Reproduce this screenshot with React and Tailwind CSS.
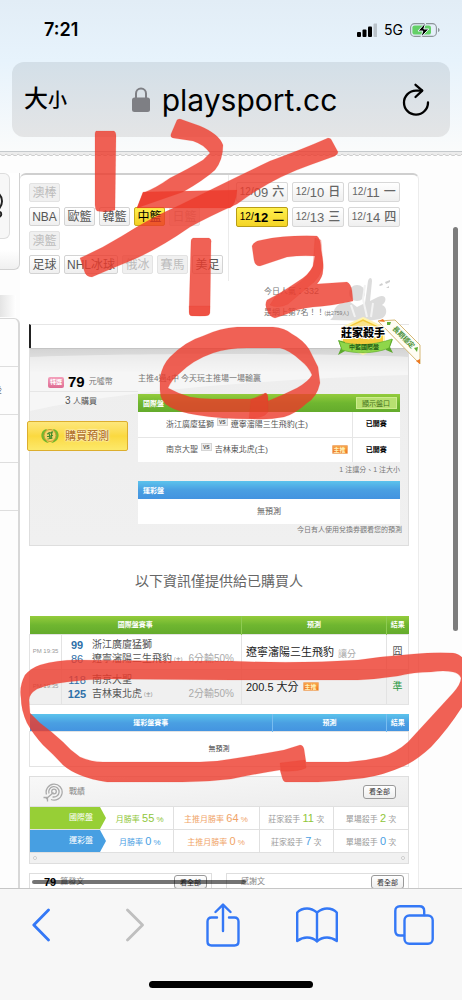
import React from 'react';

const tagRows = [
  [{ label: '澳棒', off: true }],
  [{ label: 'NBA' }, { label: '歐籃' }, { label: '韓籃' }, { label: '中籃', active: true }, { label: '日籃', off: true }],
  [{ label: '澳籃', off: true }],
  [{ label: '足球' }, { label: 'NHL冰球' }, { label: '俄冰', off: true }, { label: '賽馬', off: true }, { label: '美足' }],
];

const dateRows = [
  [{ day: '09', week: '六' }, { day: '10', week: '日' }, { day: '11', week: '一' }],
  [{ day: '12', week: '二', active: true }, { day: '13', week: '三' }, { day: '14', week: '四' }],
];

const games = [
  {
    time: 'PM 19:35',
    away: { score: 99, name: '浙江廣廈猛獅', bold: true },
    home: { score: 86, name: '遼寧瀋陽三生飛豹' },
    odds: '6分輸50%',
    pick: '遼寧瀋陽三生飛豹',
    kind: '讓分',
    result: '囧',
  },
  {
    time: 'PM 19:35',
    away: { score: 118, name: '南京大聖' },
    home: { score: 125, name: '吉林東北虎', bold: true },
    odds: '2分輸50%',
    pick: '200.5 大分',
    main: true,
    result: '準',
  },
];

const records = [
  { name: '國際盤', blue: false, rate: 55, mainRate: 64, banker: 11, single: 2 },
  { name: '運彩盤', blue: true, rate: 0, mainRate: 0, banker: 7, single: 0 },
];

const green = 'bg-linear-to-b from-[#94cc3c] via-[#6fb630] to-[#64ab2c]';
const blue = 'bg-linear-to-b from-[#5cc3ec] via-[#4a9fe2] to-[#4393e0]';

const StatusBar = () => (
  <div className="flex items-center justify-between pt-[18px] pl-11 pr-[22px] h-[42px]">
    <span className="text-[18px] leading-6 font-semibold">7:21</span>
    <div className="flex items-center gap-[7px]">
      <svg width="20" height="14" viewBox="0 0 20 14" aria-hidden="true">
        <rect x="0" y="9" width="4" height="5" rx="1" />
        <rect x="5.5" y="6.5" width="4" height="7.5" rx="1" />
        <rect x="11" y="3.5" width="4" height="10.5" rx="1" />
        <rect x="16.5" y="0.5" width="4" height="13.5" rx="1" fill="#b9c2c9" />
      </svg>
      <span className="text-[14px] leading-6">5G</span>
      <svg width="30" height="16" viewBox="0 0 30 16" aria-hidden="true">
        <rect x="0.6" y="1.6" width="25.8" height="12.8" rx="4" fill="none" stroke="#8d9499" strokeWidth="1.1" />
        <rect x="2.4" y="3.4" width="18.6" height="9.2" rx="2.2" fill="#63d067" />
        <path d="M28 6v4c1-.4 1.6-1.1 1.6-2s-.6-1.6-1.6-2z" fill="#8d9499" />
        <path d="M15.8 0.5L8 9h4.8l-2 6.5L18.8 7h-5z" stroke="#e8f3fb" strokeWidth="1" />
      </svg>
    </div>
  </div>
);

const AddressBar = () => (
  <div className="mx-3 mt-5 h-[75px] rounded-xl bg-linear-to-b from-[#d3dfe8] to-[#e4e5e6] flex items-center justify-between pl-3 pr-5">
    <button type="button" className="font-medium leading-8 text-[24px]" aria-label="大小">
      大<span className="text-[19px]">小</span>
    </button>
    <div className="flex items-center gap-3">
      <svg width="18" height="25" viewBox="0 0 18 25" fill="#7e7f84" aria-hidden="true">
        <path d="M4 11V6.5a5 5 0 0 1 10 0V11" fill="none" stroke="#7e7f84" strokeWidth="2" />
        <rect x="0" y="10.5" width="18" height="14.5" rx="2.5" />
      </svg>
      <span className="text-[30px] leading-9">playsport.cc</span>
    </div>
    <button type="button" aria-label="重新載入">
      <svg width="28" height="33" viewBox="0 0 28 33" fill="none" stroke="#000" strokeWidth="2.3" strokeLinecap="round" strokeLinejoin="round">
        <path d="M20 7.6H14A12 12 0 1 0 26 19.5" />
        <path d="M13.5 1.8L20.3 7.6L13.5 14" />
      </svg>
    </button>
  </div>
);

const LeftRail = () => (
  <div className="w-5 shrink-0 flex flex-col overflow-hidden">
    <div className="h-[97px] pr-[9px] rounded-br-md border-r border-b border-[#d2d2d2] bg-linear-to-b from-white from-80% to-[#f0f0f0]">
      <div className="h-[66px] rounded-r-md border border-l-0 border-[#dddddd] bg-[#f7f7f7] flex items-center">
        <svg width="4" height="26" viewBox="0 0 4 26" aria-hidden="true">
          <path d="M-1 1C3 5 3 11 -1 16M-1 19c3 0 3 4 0 5" fill="none" stroke="#222" strokeWidth="2" />
        </svg>
      </div>
    </div>
    <div className="h-12 pt-[25px] pr-1">
      <div className="h-[22px] bg-linear-to-r from-[#e4e4e4] to-white" />
    </div>
    <div className="flex-1 rounded-tr-md border-r-2 border-t border-[#d8d8d8] text-[9px] text-[#777]">
      <div className="h-12 border-b border-[#dedede]" />
      <div className="h-12 border-b border-[#dedede] flex items-center">
        <span className="-ml-[7px]">後</span>
      </div>
      <div className="h-12 border-b border-[#dedede]" />
      <div className="h-12 border-b border-[#dedede]" />
    </div>
  </div>
);

const Tag = ({ label, off, active }) => {
  let look = 'border-[#d3d3d3] bg-linear-to-b from-white to-[#efefef] text-[#555]';
  if (off) look = 'border-[#e3e3e3] bg-[#f0f0f0] text-[#bcbcbc]';
  if (active) look = 'border-[#c5a91c] bg-linear-to-b from-[#fff04c] to-[#f4cf21] text-black';
  return (
    <button type="button" className={`shrink-0 h-[19px] min-w-[31px] px-[2px] rounded-xs border text-[12px] leading-none whitespace-nowrap ${look}`}>
      {label}
    </button>
  );
};

const DateButton = ({ day, week, active }) => (
  <button
    type="button"
    className={`h-5 w-[52px] rounded-xs border flex items-center justify-center leading-none ${
      active
        ? 'border-[#b89d16] bg-linear-to-b from-[#fff04c] to-[#f4d424] text-black'
        : 'border-[#d8d8d8] bg-linear-to-b from-white to-[#efefef] text-[#666]'
    }`}
  >
    <span className="text-[10px]">12/</span>
    <span className={`text-[13px] ${active ? 'font-bold' : ''}`}>{day}</span>
    <span className="ml-1 text-[12px] font-medium">{week}</span>
  </button>
);

const Filters = () => (
  <div className="flex">
    <div className="flex-1 min-w-0 pt-2 h-[106px] flex flex-col gap-[5px] border-r border-[#ebebeb]">
      {tagRows.map((row, i) => (
        <div key={i} className="flex gap-1">
          {row.map((t) => <Tag key={t.label} {...t} />)}
        </div>
      ))}
    </div>
    <div className="w-[180px] pt-[7px] pl-[7px] pr-[9px] flex flex-col gap-[5px]">
      {dateRows.map((row, i) => (
        <div key={i} className="flex justify-between">
          {row.map((d) => <DateButton key={d.day} {...d} />)}
        </div>
      ))}
    </div>
  </div>
);

const Medal = () => (
  <svg className="absolute -right-[13px] -top-[74px]" width="96" height="90" viewBox="0 0 96 90" aria-hidden="true">
    {/* faded statue */}
    <g fill="#dcdcdc">
      <circle cx="32" cy="18" r="8" />
      <path d="M8 42c0-8 4-14 12-14l4-2 8 6 8-4 3-22c1-4 4-4 4 0l-2 20 8-4c8-4 10 4 4 8 6 2 6 12-2 14l-12 2-38-1z" />
      <path d="M54 10l3-2 1 2-3 1zM60 7l5-2 0 2-4 2zM61 13l3-2 0 2z" fill="#cfcfcf" />
    </g>
    <path d="M40 10l-2 14 4 18M26 30l4 12M48 28l-2 14" fill="none" stroke="#f3f3f3" strokeWidth="2" />
    {/* corner ribbon */}
    <path d="M53 46L70 45L95 70V89z" fill="#fffdf4" stroke="#d5b876" strokeWidth="1" />
    <path d="M53 46l5-2 2 3zM95 84v5l-4-3z" fill="#ee7a23" />
    <path d="M62 47l4 0-1 3-3 0zM89 73l4-1-1 5z" fill="#5eae36" />
    <text x="0" y="0" transform="translate(67 54) rotate(45)" fontSize="7" fontWeight="700" fill="#4d9139">長期穩定</text>
    {/* hexagon */}
    <path d="M38 43L59 53V70L38 79L17 70V53z" fill="#f4cb3d" stroke="#fff3b0" strokeWidth="2" />
    <path d="M38 46L56 54V60H20V54z" fill="#fbe38a" />
    <path d="M13 65l7 2v9l-7 4 3-7zM68 64l-7 3v8l7 3-3-6z" fill="#5ba92c" />
    <path d="M14 66C30 72 50 70 67 64L64 73C50 79 30 79 17 75z" fill="#8fd64a" stroke="#5ba92c" strokeWidth="0.6" />
    <text x="38" y="62" textAnchor="middle" fontSize="11" fontWeight="900" stroke="#fff" strokeWidth="2" paintOrder="stroke">莊家殺手</text>
    <text x="39" y="74" textAnchor="middle" fontSize="6" fontWeight="700" fill="#245c14">中籃國際盤</text>
  </svg>
);

const MainPick = () => (
  <span className="inline-flex items-center justify-center w-4 h-[9px] rounded-[1px] border border-[#f0b27a] bg-linear-to-b from-[#f8a54a] to-[#ee7420] text-[6px] leading-none font-bold text-[#fff2b8]">
    主推
  </span>
);

const Versus = () => (
  <span className="inline-block mx-[3px] px-px border border-[#d5d5d5] bg-[#eee] text-[5px] leading-[6px] align-[3px] font-bold">VS</span>
);

const BuyPanel = () => (
  <section className="relative border border-[#dedede] border-t-[#c4c4c4] bg-linear-to-b from-[#d4d4d4] via-[#eeeeee] via-12% to-[#f0f0f0] flex h-[198px]">
    <svg className="absolute inset-x-0 top-0 w-full h-[70px]" viewBox="0 0 380 70" preserveAspectRatio="none" aria-hidden="true">
      <path d="M0 8C90 4 290 4 380 8V26C240 30 90 42 0 62z" fill="#fff" fillOpacity="0.45" />
    </svg>
    <div className="relative w-[108px] pt-6">
      <p className="flex items-center pl-[18px] gap-1 text-[8px] leading-[18px] text-[#777]">
        <span className="w-4 h-[11px] flex items-center justify-center rounded-xs bg-linear-to-b from-[#f3a0bb] to-[#de6b92] text-[6px] text-white font-bold">特選</span>
        <span className="text-[15px] font-bold text-black">79</span>
        元噓幣
      </p>
      <p className="border-t border-[#e6e6e6] pr-1.5 text-center text-[8px] leading-[18px] text-[#555]">
        <span className="text-[10px]">3</span> 人購買
      </p>
      <button
        type="button"
        className="-ml-[3px] mt-2.5 w-[101px] h-[30px] pl-3 flex items-center gap-[5px] rounded-xs border border-[#dcae2e] bg-linear-to-b from-[#fde77a] via-[#fbd93f] to-[#fce96a] text-[11px] leading-none font-medium text-[#b5762a]"
      >
        <svg width="20" height="18" viewBox="0 0 20 18" aria-hidden="true">
          <path d="M7 2C1 3 0 9 3 13c2 2 4 3 6 3-4-2-6-8-2-14zM13 2c6 1 7 7 4 11-2 2-4 3-6 3 4-2 6-8 2-14z" fill="#72b62e" />
          <circle cx="10" cy="8.5" r="6" fill="#f6d36a" stroke="#c49b31" strokeWidth="1" />
          <path d="M7 7l6-2M7 9.5l6-1M9 5l1 7M12 4.5l-1 7.5M7.5 12l5-1" stroke="#3f8a2b" strokeWidth="1.2" />
        </svg>
        <span className="[text-shadow:0_0_2px_#fff,0_0_2px_#fff]">購買預測</span>
      </button>
    </div>
    <div className="relative flex-1 pr-2 pt-6 text-[8px] text-[#555]">
      <p className="leading-3 text-[#777]">主推4過4中 今天玩主推場一場輸贏</p>
      <table className="mt-[9px] w-full border-collapse bg-white">
        <thead>
          <tr className={`h-[18px] ${green}`}>
            <th className="pl-[5px] text-left text-[7px] leading-none text-white">國際盤</th>
            <th className="w-12">
              <button type="button" className="block mx-auto w-[41px] h-3 border border-[#cdec8e] bg-[#b7e070] text-[7px] leading-none font-normal text-[#447019]">顯示盤口</button>
            </th>
          </tr>
        </thead>
        <tbody>
          <tr className="h-[25px] border-b border-[#e6e6e6]">
            <td className="pl-7 leading-3">浙江廣廈猛獅<Versus />遼寧瀋陽三生飛豹(主)</td>
            <td className="border-l border-[#e6e6e6] text-center text-[7px] font-bold text-black">已開賽</td>
          </tr>
          <tr className="h-[25px]">
            <td className="pl-7 pr-1 leading-3">
              <div className="flex items-center justify-between">
                <span>南京大聖<Versus />吉林東北虎(主)</span>
                <MainPick />
              </div>
            </td>
            <td className="border-l border-[#e6e6e6] text-center text-[7px] font-bold text-black">已開賽</td>
          </tr>
        </tbody>
      </table>
      <p className="mt-0.5 text-right text-[7px] leading-3 text-[#777]">1 注讓分、1 注大小</p>
      <table className="mt-[5px] w-full border-collapse bg-white">
        <thead>
          <tr className={`h-[18px] ${blue}`}>
            <th className="pl-[5px] text-left text-[7px] leading-none text-white">運彩盤</th>
          </tr>
        </thead>
        <tbody>
          <tr className="h-[25px]"><td className="text-center leading-3">無預測</td></tr>
        </tbody>
      </table>
      <p className="-mr-0.5 text-right text-[7px] leading-3 text-[#777]">今日有人使用兌換券觀看您的預測</p>
    </div>
    <Medal />
  </section>
);

const Team = ({ score, name, bold, home }) => (
  <div className="flex items-center leading-[14px] whitespace-nowrap">
    <span className={`w-5 shrink-0 text-center text-[11px] text-[#2f70a8] ${bold ? 'font-bold' : ''}`}>{score}</span>
    <span className="ml-[5px] text-[10px] text-[#555]">{name}</span>
    {home && <span className="ml-[2px] text-[5px] text-[#888]">(主)</span>}
  </div>
);

const GameTable = () => (
  <table className="w-full table-fixed border-collapse">
    <colgroup>
      <col className="w-8" />
      <col />
      <col className="w-[145px]" />
      <col className="w-[22px]" />
    </colgroup>
    <thead>
      <tr className={`h-[18px] text-[7px] leading-none text-white ${green}`}>
        <th colSpan={2}>國際盤賽事</th>
        <th className="border-l border-[#8ecb52]">預測</th>
        <th className="border-l border-[#8ecb52]">結果</th>
      </tr>
    </thead>
    <tbody>
      {games.map((g) => (
        <tr key={g.home.name} className="h-[35px] border border-[#e3e3e3] odd:bg-white even:bg-[#f0f0f0]">
          <td className="text-center text-[6px] text-[#999] whitespace-nowrap">{g.time}</td>
          <td className="border-l border-[#e3e3e3] pl-[5px]">
            <div className="flex items-end justify-between">
              <div>
                <Team {...g.away} />
                <Team {...g.home} home />
              </div>
              <span className="pr-[7px] text-[10px] leading-[14px] text-[#aaa] whitespace-nowrap">{g.odds}</span>
            </div>
          </td>
          <td className="border-l border-[#e3e3e3] pl-1">
            <div className="flex items-center gap-1 text-[11px] leading-[14px] text-[#222]">
              {g.pick}
              {g.kind && <span className="pt-1 text-[9px] text-[#aaa]">{g.kind}</span>}
              {g.main && <MainPick />}
            </div>
          </td>
          <td className={`border-l border-[#e3e3e3] text-center text-[10px] leading-3 ${g.main ? 'text-[#2f9a45]' : 'text-[#555]'}`}>{g.result}</td>
        </tr>
      ))}
    </tbody>
  </table>
);

const LotteryTable = () => (
  <table className="mt-[9px] w-full table-fixed border-collapse">
    <thead>
      <tr className={`h-[18px] text-[7px] leading-none text-white ${blue}`}>
        <th>運彩盤賽事</th>
        <th className="w-[114px] border-l border-[#79bdf0]">預測</th>
        <th className="w-[22px] border-l border-[#79bdf0]">結果</th>
      </tr>
    </thead>
    <tbody>
      <tr className="h-[35px] border border-[#e3e3e3]">
        <td colSpan={3} className="text-center text-[7px] leading-3 text-[#444]">無預測</td>
      </tr>
    </tbody>
  </table>
);

const MoreButton = () => (
  <button type="button" className="shrink-0 h-[14px] px-[5px] rounded-[3px] border border-[#999] bg-linear-to-b from-white to-[#eee] text-[7px] leading-none text-[#333]">
    看全部
  </button>
);

const Stat = ({ label, value, unit, color, text = 'text-[#999]' }) => (
  <td className={`border-l border-[#e0e0e0] text-center text-[8px] leading-none whitespace-nowrap ${text}`}>
    {label} <span className={`text-[11px] ${color}`}>{value}</span> {unit}
  </td>
);

const Records = () => (
  <section className="mt-[9px] border border-[#dedede] bg-[#f1f1f1]">
    <div className="h-[29px] pl-[13px] pr-3 flex items-center gap-[6px] bg-linear-to-br from-[#f8f8f8] to-[#ececec]">
      <svg width="20" height="20" viewBox="0 0 20 20" fill="none" stroke="#aaa" strokeWidth="1.3" aria-hidden="true">
        <path d="M3.5 12.5A8 8 0 1 1 8 17.5" />
        <path d="M6 11.5A5.2 5.2 0 1 1 9.5 14.8" />
        <circle cx="11" cy="9.5" r="2.3" />
        <path d="M10.5 10.5L3 17M0.5 15.5h4v4" />
      </svg>
      <h3 className="flex-1 text-[8px] leading-3 text-[#888]">戰績</h3>
      <MoreButton />
    </div>
    <table className="w-full table-fixed border-collapse bg-white">
      <tbody>
        {records.map((r) => {
          const tone = r.blue ? 'text-[#4aa0e3]' : 'text-[#8fc63a]';
          return (
            <tr key={r.name} className="h-[23px] border-y border-[#e0e0e0]">
              <th scope="row" className="relative w-[77px] p-0 text-right text-[8px] leading-none font-normal text-white">
                <svg className="absolute inset-0 w-full h-full" viewBox="0 0 77 24" preserveAspectRatio="none" aria-hidden="true">
                  <path d="M0 0H70L76 12L70 24H0z" fill={r.blue ? '#479fe2' : '#97cf36'} />
                </svg>
                <span className="relative pr-[14px]">{r.name}</span>
              </th>
              <td className={`w-[66px] text-center text-[8px] leading-none whitespace-nowrap ${tone}`}>
                月勝率 <span className="text-[11px]">{r.rate}</span> %
              </td>
              <Stat label="主推月勝率" value={r.mainRate} unit="%" color="" text="w-[86px] text-[#f0a468]" />
              <Stat label="莊家殺手" value={r.banker} unit="次" color={tone} />
              <Stat label="單場殺手" value={r.single} unit="次" color={tone} />
            </tr>
          );
        })}
      </tbody>
    </table>
    <div className="h-2.5 px-[3px] flex items-center justify-between">
      <span className="size-1 rounded-full border border-[#ccc] bg-white" />
      <span className="size-1 rounded-full border border-[#ccc] bg-white" />
    </div>
  </section>
);

const Posts = () => (
  <div className="mt-[9px] grid grid-cols-2 gap-[14px]">
    <section className="h-10 pt-px pr-1 pl-[14px] flex items-start gap-1 border border-[#dedede]">
      <b className="text-[11px] leading-[14px] text-black">79</b>
      <span className="flex-1 text-[8px] leading-[14px] text-[#888]">篇發文</span>
      <MoreButton />
    </section>
    <section className="h-10 pt-px pr-1 pl-[14px] flex items-start border border-[#dedede]">
      <span className="flex-1 text-[8px] leading-[14px] text-[#888]">感謝文</span>
      <MoreButton />
    </section>
  </div>
);

// finger-drawn marks over the page
const Ink = () => (
  <svg className="absolute left-0 top-0 pointer-events-none" width="462" height="1000" viewBox="0 0 462 1000" aria-hidden="true">
    <g fill="#ec3a2b" fillOpacity="0.8" stroke="#ec3a2b" strokeOpacity="0.15" strokeWidth="1" strokeLinejoin="round">
      <path d="M96 131H114Q116 132 116 136L115 210Q106 213 97 211Q95 209 95 205V134Q95 132 96 131z" />
      <path d="M177 120Q179 118 183 120L200 126Q219 134 223 145Q223 160 215 170Q204 180 183 192L137 208L143 193Q156 188 170 178Q190 168 203 160L210 153Q203 144 193 141L173 138Q170 137 171 134z" />
      <path d="M143 192L237 190Q236 205 230 208L137 208z" />
      <path d="M80 258Q101 249 122 236Q150 218 180 205Q230 180 270 161Q303 149 328 138Q331 138 332 141L338 152Q338 154 335 156L310 165Q272 178 237 204Q208 217 190 227Q157 250 130 261Q108 270 92 277Q87 277 85 273z" />
      <path d="M193 238H209Q212 239 211 243L210 313Q209 316 205 316H192Q189 316 189 312L191 241Q191 239 193 238z" />
      <path d="M189 306L210 306L209 315Q200 317 190 315z" fillOpacity="0.4" />
      <path d="M252 246Q254 241 262 240Q285 235 317 236Q321 239 321 250Q324 265 323 270Q323 277 317 284L347 282Q351 284 352 291L353 301Q331 306 313 307Q295 309 287 314L275 318Q270 317 268 312Q264 305 267 300Q281 293 297 282Q309 275 313 266L315 256Q301 255 287 257L260 266Q255 266 254 260z" />
      <path d="M315 238L321 240L323 265Q321 278 308 287L288 304Q278 309 270 305L275 297Q304 284 313 267z" fillOpacity="0.35" />
      <path fillRule="evenodd" d="M160 377Q163 364 170 357Q186 341 203 336Q220 328 237 327L273 327Q285 328 292 334Q303 340 309 349L318 367L320 383Q317 397 307 403Q295 414 284 417Q268 420 253 419Q220 419 197 415Q179 412 170 407Q160 402 160 390zM168 388Q179 394 190 397Q201 399 213 399L250 399Q262 397 265 393Q268 392 268 401Q283 395 297 388Q309 381 312 375Q309 367 300 360Q289 350 280 348H247Q228 348 213 353Q193 360 180 373Q172 379 168 388z" />
      <path d="M251 400L262 394Q268 392 268 398V412Q263 419 249 418z" fillOpacity="0.45" />
      <path d="M453 653Q467 655 467 674Q467 700 462 707Q448 729 431 747Q417 760 404 766Q384 775 364 778Q340 781 318 782H286Q283 782 282 777L280 770Q255 774 231 779Q207 782 183 782H107Q92 780 80 775Q70 771 63 765Q54 755 43 745Q33 734 27 723Q21 710 21 698Q19 686 25 675Q31 668 40 665Q57 660 77 660L167 661H230Q295 664 358 660Q386 656 414 654Q434 652 453 653zM453 672Q444 670 431 672Q414 672 398 676Q378 679 358 680H231L110 679Q88 679 67 682Q49 684 37 689Q29 694 29 700L30 713L40 723Q51 731 63 742Q70 750 80 757Q91 762 103 762H200Q216 762 231 759Q257 755 284 750L300 745Q303 745 304 749L306 762H348Q365 761 381 757Q396 753 408 742L431 717L453 693Q461 684 461 678Q459 673 453 672z" fillRule="evenodd" />
      <path d="M280 763L305 760L306 768Q297 772 281 771z" fillOpacity="0.45" />
    </g>
  </svg>
);

const Toolbar = () => (
  <nav className="shrink-0 h-28 border-t border-[#c6c6c6] bg-[#f7f7f7] flex flex-col justify-between items-center pt-[14px] pb-3">
    <div className="w-full pl-8 pr-7 flex items-center justify-between text-[#3478f6] [&_svg]:fill-none [&_svg]:stroke-current [&_svg]:[stroke-linecap:round] [&_svg]:[stroke-linejoin:round]">
      <button type="button" aria-label="上一頁" className="w-[38px]">
        <svg width="18" height="34" viewBox="0 0 18 34" strokeWidth="2.8"><path d="M16.5 2L1.8 17L16.5 32" /></svg>
      </button>
      <button type="button" aria-label="下一頁" className="w-6 text-[#bfbfbf]">
        <svg width="18" height="34" viewBox="0 0 18 34" strokeWidth="2.8"><path d="M1.5 2L16.5 17L1.5 32" /></svg>
      </button>
      <button type="button" aria-label="分享">
        <svg width="34" height="44" viewBox="0 0 34 44" strokeWidth="2.4">
          <path d="M11 14.5H5.5Q1.5 14.5 1.5 18.5V38.5Q1.5 42.5 5.5 42.5H28.5Q32.5 42.5 32.5 38.5V18.5Q32.5 14.5 28.5 14.5H23" />
          <path d="M17 28V2M9.5 9L17 1.6L24.5 9" />
        </svg>
      </button>
      <button type="button" aria-label="書籤">
        <svg width="42" height="36" viewBox="0 0 42 36" strokeWidth="2.4">
          <path d="M21 34.5V5.5Q16 1.5 11 1.5Q5 1.5 1.2 5.5V34Q6 30.5 11 30.5Q17 30.5 21 34.5Q25 30.5 31 30.5Q36 30.5 40.8 34V5.5Q37 1.5 31 1.5Q26 1.5 21 5.5" />
        </svg>
      </button>
      <button type="button" aria-label="分頁">
        <svg width="40" height="40" viewBox="0 0 40 40" strokeWidth="2.4">
          <path d="M10 30.5H6Q1.3 30.5 1.3 25.8V6Q1.3 1.3 6 1.3H25.5Q30.2 1.3 30.2 6V10" />
          <rect x="10.5" y="10.5" width="28.2" height="28.2" rx="4.7" />
        </svg>
      </button>
    </div>
    <span className="w-[164px] h-[7px] rounded-full bg-black" />
  </nav>
);

export default function App() {
  return (
    <div className="relative h-screen flex flex-col overflow-hidden bg-[#fdfdfd] font-['Liberation_Sans','Noto_Sans_CJK_TC',sans-serif]">
      <header className="shrink-0 h-[152px] border-b border-[#c5c9cc] bg-linear-to-b from-[#e2edf6] via-[#e7f3fc] via-40% to-[#fafbfb] font-['Inter','Noto_Sans_CJK_TC',sans-serif]">
        <StatusBar />
        <AddressBar />
      </header>

      <main className="relative flex-1 min-h-0 overflow-hidden flex flex-col">
        <svg className="w-full h-1 shrink-0" aria-hidden="true">
          <defs>
            <pattern id="teeth" width="6" height="4" patternUnits="userSpaceOnUse">
              <path d="M0 0H6V2L4.5 3.5H2L0 2z" fill="#ececec" />
              <path d="M0 2L2 3.5H4.5L6 2" fill="none" stroke="#c4c4c4" strokeWidth="0.8" />
            </pattern>
          </defs>
          <rect width="100%" height="4" fill="url(#teeth)" />
        </svg>
        <div className="flex-1 mt-[17px] flex">
          <LeftRail />
          <article className="flex-1 min-w-0 mr-[43px] pl-[9px] pr-[9px] border-t-2 border-r border-t-[#cfcfcf] border-r-[#ececec] rounded-t-md bg-white">
            <Filters />
            <div className="relative z-10 pl-[235px] text-[8px] leading-[21px] text-[#777]">
              <p>今日人氣：<span className="text-[9px]">332</span></p>
              <p>是網上第7名！！<span className="text-[5px]">(共2759人)</span></p>
            </div>
            <div className="h-6 border-t border-t-[#e6e6e6] border-l-2 border-l-[#222]" />
            <BuyPanel />
            <h2 className="py-[25px] text-center text-[14px] leading-5 text-[#666]">以下資訊僅提供給已購買人</h2>
            <GameTable />
            <LotteryTable />
            <Records />
            <Posts />
          </article>
        </div>
        <span className="absolute right-1 top-[75px] w-[5px] h-[404px] rounded-full bg-[#7d7d7d]" />
        <span className="absolute left-8 bottom-1 w-[214px] h-1 rounded-full bg-black/55" />
      </main>

      <Toolbar />
      <div className="absolute inset-0 z-20 overflow-hidden pointer-events-none">
        <Ink />
      </div>
    </div>
  );
}
